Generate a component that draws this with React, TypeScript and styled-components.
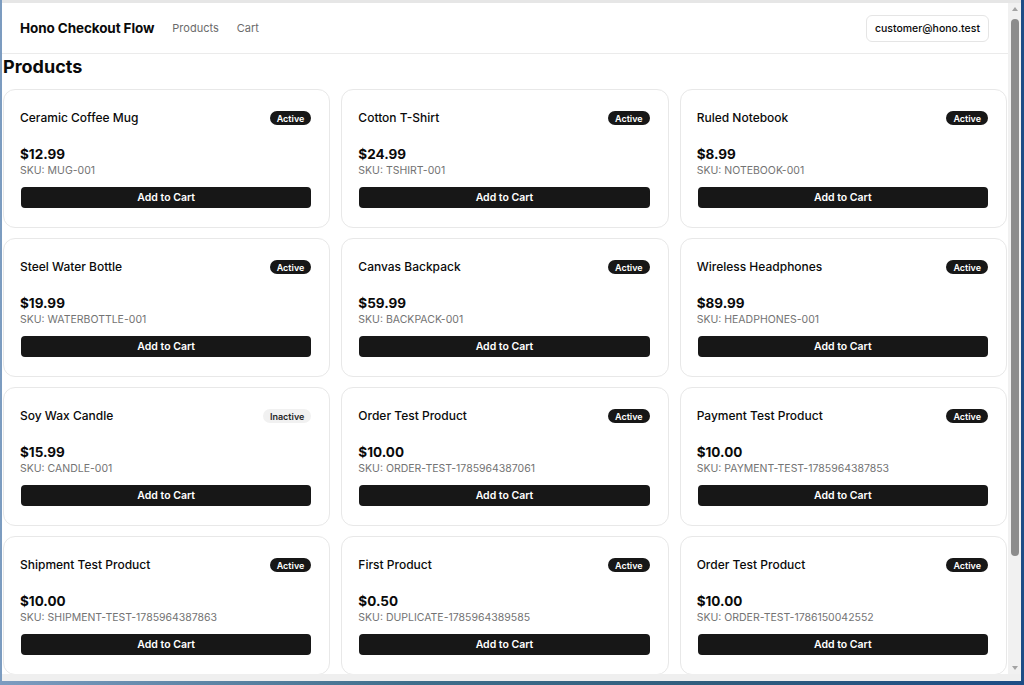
import styled, { createGlobalStyle } from 'styled-components';

const GlobalStyle = createGlobalStyle`
  * {
    box-sizing: border-box;
  }

  html,
  body {
    margin: 0;
    height: 685px;
    overflow: hidden;
  }

  body {
    font-family: Inter, 'Noto Sans', 'Liberation Sans', sans-serif;
    color: #0a0a0a;
    background: linear-gradient(90deg, #7c9cc0 0%, #3f6f8c 40%, #2f5d7d 70%, #1d4d86 100%);
  }
`;

type Product = {
  name: string;
  price: string;
  sku: string;
  active: boolean;
};

const products: Product[] = [
  { name: 'Ceramic Coffee Mug', price: '$12.99', sku: 'MUG-001', active: true },
  { name: 'Cotton T-Shirt', price: '$24.99', sku: 'TSHIRT-001', active: true },
  { name: 'Ruled Notebook', price: '$8.99', sku: 'NOTEBOOK-001', active: true },
  { name: 'Steel Water Bottle', price: '$19.99', sku: 'WATERBOTTLE-001', active: true },
  { name: 'Canvas Backpack', price: '$59.99', sku: 'BACKPACK-001', active: true },
  { name: 'Wireless Headphones', price: '$89.99', sku: 'HEADPHONES-001', active: true },
  { name: 'Soy Wax Candle', price: '$15.99', sku: 'CANDLE-001', active: false },
  { name: 'Order Test Product', price: '$10.00', sku: 'ORDER-TEST-1785964387061', active: true },
  { name: 'Payment Test Product', price: '$10.00', sku: 'PAYMENT-TEST-1785964387853', active: true },
  { name: 'Shipment Test Product', price: '$10.00', sku: 'SHIPMENT-TEST-1785964387863', active: true },
  { name: 'First Product', price: '$0.50', sku: 'DUPLICATE-1785964389585', active: true },
  { name: 'Order Test Product', price: '$10.00', sku: 'ORDER-TEST-1786150042552', active: true },
];

const Window = styled.div`
  margin-left: 2px;
  width: 1019px;
  height: 681px;
  display: flex;
  background: #ffffff;
  border-top: 3px solid #e6e6e6;
  border-bottom: 7px solid #efefef;
`;

const Viewport = styled.div`
  flex: 1;
  overflow: hidden;
  background: #ffffff;
`;

const Scrollbar = styled.div`
  width: 13px;
  flex: none;
  display: flex;
  flex-direction: column;
  align-items: center;
  background: #f1f1f1;
  padding: 4px 0;
`;

const Arrow = styled.div<{ $down?: boolean }>`
  width: 0;
  height: 0;
  border-left: 3.5px solid transparent;
  border-right: 3.5px solid transparent;
  ${({ $down }) =>
    $down ? 'border-top: 4px solid #a3a3a3;' : 'border-bottom: 4px solid #a3a3a3;'}
`;

const Thumb = styled.div`
  width: 8px;
  height: 537px;
  margin: 8px 0 auto;
  border-radius: 4px;
  background: #8c8c8c;
`;

const Header = styled.header`
  height: 51px;
  display: flex;
  align-items: center;
  padding: 0 19px 0 18px;
  border-bottom: 1px solid #ebebeb;
`;

const Brand = styled.div`
  font-size: 13.5px;
  font-weight: 700;
  letter-spacing: -0.1px;
  margin-right: 18px;
`;

const Nav = styled.nav`
  display: flex;
  gap: 18px;
`;

const NavLink = styled.a`
  font-size: 11px;
  color: #6b6b6b;
  text-decoration: none;
`;

const UserButton = styled.button`
  margin-left: auto;
  height: 27px;
  padding: 0 8px;
  border: 1px solid #e5e5e5;
  border-radius: 6px;
  background: #ffffff;
  font-family: inherit;
  font-size: 10.5px;
  font-weight: 500;
  color: #0a0a0a;
`;

const Main = styled.main`
  padding: 0 1px;
`;

const PageTitle = styled.h1`
  margin: 1px 0 10px;
  font-size: 18px;
  line-height: 24px;
  font-weight: 700;
`;

const Grid = styled.div`
  display: grid;
  grid-template-columns: repeat(3, 1fr);
  column-gap: 11px;
  row-gap: 10px;
`;

const Card = styled.div`
  display: flex;
  flex-direction: column;
  height: 139px;
  padding: 20px 18px 18px 16px;
  border: 1px solid #e8e8e8;
  border-radius: 12px;
  background: #ffffff;
`;

const CardHeader = styled.div`
  display: flex;
  align-items: center;
  justify-content: space-between;
  height: 16px;
`;

const Name = styled.div`
  font-size: 12px;
  font-weight: 500;
  line-height: 16px;
`;

const Badge = styled.span<{ $active: boolean }>`
  height: 14px;
  padding: 0 7px;
  display: inline-flex;
  align-items: center;
  border-radius: 7px;
  font-size: 9px;
  font-weight: 600;
  background: ${({ $active }) => ($active ? '#171717' : '#f1f1f1')};
  color: ${({ $active }) => ($active ? '#ffffff' : '#262626')};
`;

const Price = styled.div`
  margin-top: 19px;
  font-size: 13.5px;
  line-height: 18px;
  font-weight: 700;
`;

const Sku = styled.div`
  margin-top: 1px;
  font-size: 10.5px;
  line-height: 14px;
  color: #737373;
`;

const AddButton = styled.button`
  margin-top: 9px;
  margin-left: 1px;
  height: 21px;
  width: calc(100% - 1px);
  border: none;
  border-radius: 4px;
  background: #171717;
  color: #ffffff;
  font-family: inherit;
  font-size: 10.5px;
  font-weight: 600;
`;

const ProductCard = ({ product }: { product: Product }) => (
  <Card>
    <CardHeader>
      <Name>{product.name}</Name>
      <Badge $active={product.active}>{product.active ? 'Active' : 'Inactive'}</Badge>
    </CardHeader>
    <Price>{product.price}</Price>
    <Sku>SKU: {product.sku}</Sku>
    <AddButton type="button">Add to Cart</AddButton>
  </Card>
);

const App = () => (
  <>
    <GlobalStyle />
    <Window>
      <Viewport>
        <Header>
          <Brand>Hono Checkout Flow</Brand>
          <Nav>
            <NavLink href="#">Products</NavLink>
            <NavLink href="#">Cart</NavLink>
          </Nav>
          <UserButton type="button">customer@hono.test</UserButton>
        </Header>
        <Main>
          <PageTitle>Products</PageTitle>
          <Grid>
            {products.map((p, i) => (
              <ProductCard key={`${p.sku}-${i}`} product={p} />
            ))}
          </Grid>
        </Main>
      </Viewport>
      <Scrollbar>
        <Arrow />
        <Thumb />
        <Arrow $down />
      </Scrollbar>
    </Window>
  </>
);

export default App;
